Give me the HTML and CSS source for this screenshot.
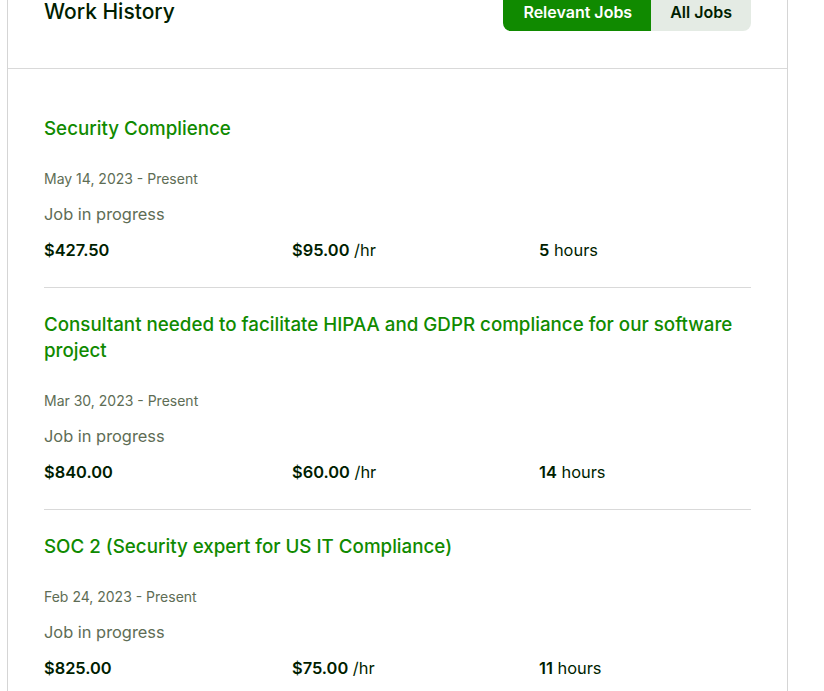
FILE: index.html
```html
<!DOCTYPE html>
<html>
<head>
<meta charset="utf-8">
<link rel="stylesheet" href="styles.css">
</head>
<body>
<section class="card">
  <header class="card-header">
    <h2 class="card-title">Work History</h2>
    <div class="toggle">
      <button class="toggle-btn active">Relevant Jobs</button>
      <button class="toggle-btn">All Jobs</button>
    </div>
  </header>
  <div class="jobs">
    <article class="job">
      <h3 class="job-title">Security Complience</h3>
      <div class="job-date">May 14, 2023 - Present</div>
      <div class="job-status">Job in progress</div>
      <div class="job-stats">
        <div><strong>$427.50</strong></div>
        <div><strong>$95.00</strong> /hr</div>
        <div><strong>5</strong> hours</div>
      </div>
    </article>
    <article class="job">
      <h3 class="job-title">Consultant needed to facilitate HIPAA and GDPR compliance for our software project</h3>
      <div class="job-date">Mar 30, 2023 - Present</div>
      <div class="job-status">Job in progress</div>
      <div class="job-stats">
        <div><strong>$840.00</strong></div>
        <div><strong>$60.00</strong> /hr</div>
        <div><strong>14</strong> hours</div>
      </div>
    </article>
    <article class="job">
      <h3 class="job-title">SOC 2 (Security expert for US IT Compliance)</h3>
      <div class="job-date">Feb 24, 2023 - Present</div>
      <div class="job-status">Job in progress</div>
      <div class="job-stats">
        <div><strong>$825.00</strong></div>
        <div><strong>$75.00</strong> /hr</div>
        <div><strong>11</strong> hours</div>
      </div>
    </article>
  </div>
</section>
</body>
</html>
```

FILE: styles.css
```css
* { box-sizing: border-box; }
html, body { margin: 0; padding: 0; background: #fff; }
body {
  font-family: Inter, "Liberation Sans", Arial, sans-serif;
  color: #001e00;
  overflow: hidden;
}
.card {
  margin: -30px 0 0 7px;
  width: 781px;
  border: 1px solid #d5d5d5;
  background: #fff;
}
.card-header {
  display: flex;
  align-items: flex-end;
  justify-content: space-between;
  padding: 22px 36px 37px 36px;
  border-bottom: 1px solid #d9d9d9;
}
.card-title {
  margin: 0 0 5px;
  font-size: 21px;
  line-height: 28px;
  font-weight: 500;
  color: #001e00;
}
.toggle {
  display: flex;
  height: 38px;
  border-radius: 8px;
  overflow: hidden;
}
.toggle-btn {
  border: 0;
  font-family: inherit;
  font-size: 16px;
  font-weight: 600;
  padding: 0 19px;
  height: 38px;
  background: #e4ebe4;
  color: #001e00;
}
.toggle-btn.active {
  background: #108a00;
  color: #fff;
  padding: 0 19px 0 20px;
}
.jobs {
  padding: 23px 36px 0 36px;
}
.job {
  padding: 24px 0 25px;
  border-bottom: 1px solid #d9d9d9;
}
.job-title {
  margin: 0;
  font-size: 18.75px;
  line-height: 26px;
  font-weight: 500;
  color: #108a00;
}
.job-date {
  margin-top: 27px;
  font-size: 14px;
  line-height: 20px;
  color: #5e6d55;
}
.job-status {
  margin-top: 13px;
  font-size: 16.4px;
  line-height: 24px;
  color: #5e6d55;
}
.job-stats {
  margin-top: 12px;
  display: grid;
  grid-template-columns: 248px 247px 1fr;
  font-size: 16.4px;
  line-height: 24px;
  color: #001e00;
}
.job-stats strong { font-weight: 600; }
```
